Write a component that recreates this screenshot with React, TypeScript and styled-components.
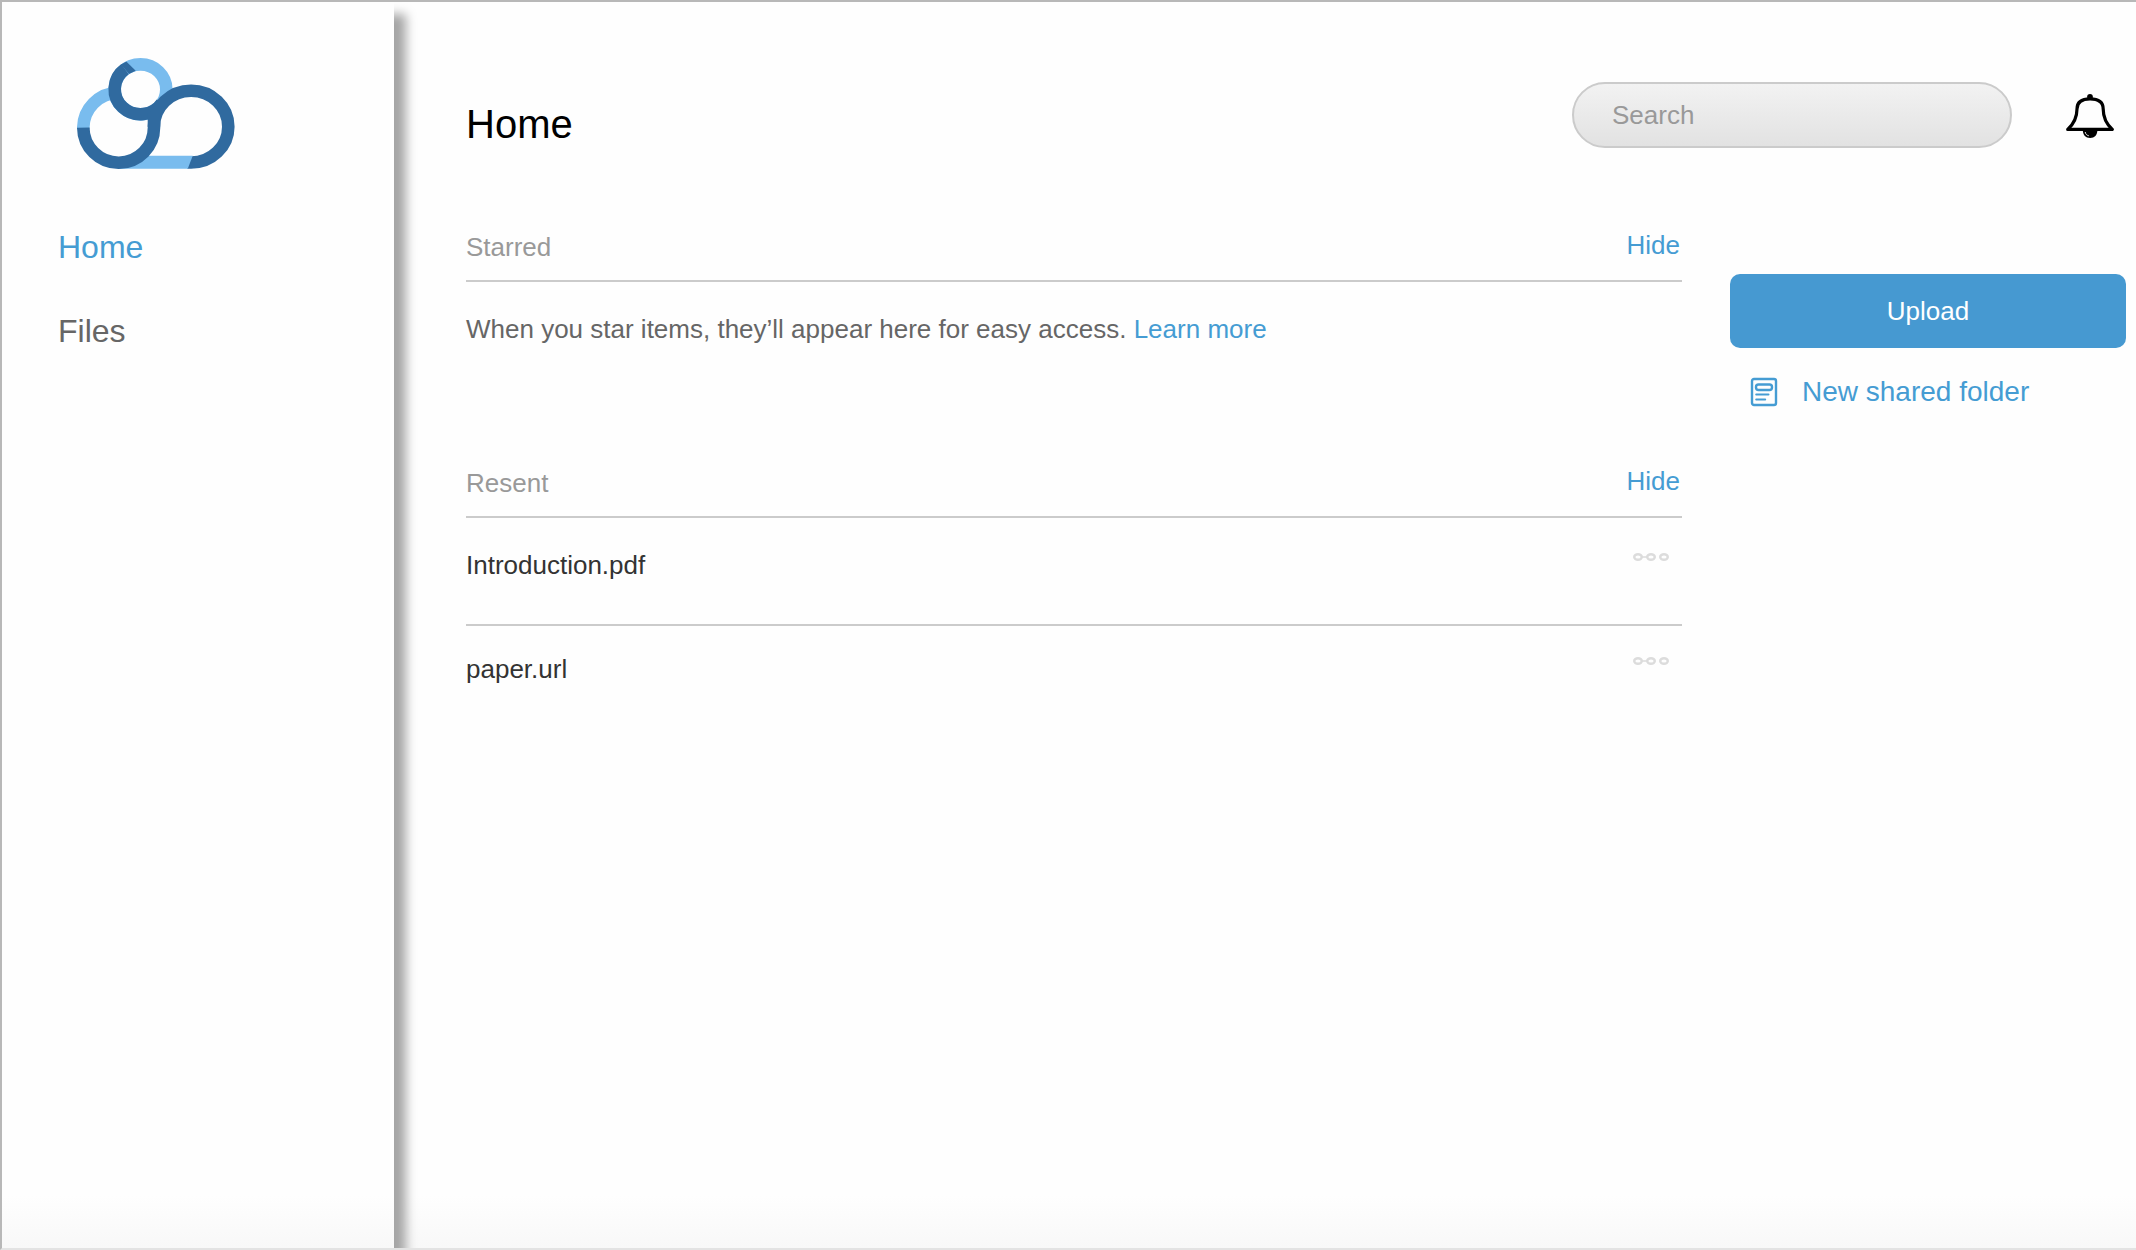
import React, { useState } from "react";
import styled, { createGlobalStyle } from "styled-components";

const color = {
  blue: "#459cd3",
  button: "#4699d1",
  logoDark: "#306a9f",
  logoLight: "#79bcee",
  line: "#cbcbcb",
  muted: "#999999",
  text: "#666666",
  strong: "#333333",
};

const GlobalStyle = createGlobalStyle`
  *, *::before, *::after { box-sizing: border-box; }
  body {
    margin: 0;
    font-family: "Liberation Sans", Arial, Helvetica, sans-serif;
    font-size: 26px;
    line-height: 30px;
    color: ${color.text};
  }
  button, input { font: inherit; }
  h1, h2, p, ul { margin: 0; padding: 0; font-weight: 400; }
  svg { display: block; }
`;

const Shell = styled.div`
  display: flex;
  min-height: 100vh;
  overflow: hidden;
  border-top: 2px solid #b8b8b8;
  border-left: 2px solid #b8b8b8;
  border-bottom: 2px solid #e3e3e3;
  background: linear-gradient(to top, #f8f8f8, #fefefe 52px);
`;

const Sidebar = styled.aside`
  flex: 0 0 392px;
  padding: 56px 20px 0 56px;
  box-shadow: 12px 12px 10px #a6a6a6;
`;

const LogoLink = styled.a`
  display: block;
  width: fit-content;
  margin-left: 19px;
`;

const Nav = styled.nav`
  display: flex;
  flex-direction: column;
  align-items: flex-start;
  gap: 48px;
  margin-top: 60px;
`;

const NavLink = styled.a<{ $active?: boolean }>`
  font-size: 32px;
  line-height: 36px;
  text-decoration: none;
  color: ${(p) => (p.$active ? color.blue : color.text)};
`;

const Main = styled.main`
  flex: 1;
  min-width: 0;
  padding: 80px 10px 0 72px;
`;

const Header = styled.header`
  display: flex;
  align-items: flex-end;
  padding-right: 12px;
`;

const Title = styled.h1`
  flex: 1;
  font-size: 40px;
  line-height: 48px;
  color: #000;
`;

const SearchInput = styled.input`
  width: 440px;
  height: 66px;
  padding: 0 38px;
  border: 2px solid ${color.line};
  border-radius: 33px;
  background: linear-gradient(#f2f2f2, #e2e2e2);
  color: ${color.strong};
  &::placeholder { color: ${color.muted}; opacity: 1; }
`;

const BellButton = styled.button`
  display: flex;
  align-items: center;
  height: 66px;
  margin-left: 54px;
  padding: 2px 0 0;
  border: 0;
  background: none;
  color: #000;
`;

const Columns = styled.div`
  display: grid;
  grid-template-columns: minmax(0, 1fr) 396px;
  gap: 48px;
  margin-top: 82px;
`;

const Sections = styled.div`
  display: flex;
  flex-direction: column;
`;

const Section = styled.section`
  min-height: 236px;
`;

const SectionHead = styled.div`
  display: flex;
  justify-content: space-between;
  min-height: 52px;
  padding: 0 2px 18px 0;
  border-bottom: 2px solid ${color.line};
`;

const SectionTitle = styled.h2`
  align-self: flex-end;
  font-size: 26px;
  line-height: 30px;
  color: ${color.muted};
`;

const TextButton = styled.button`
  align-self: flex-start;
  padding: 0;
  border: 0;
  background: none;
  color: ${color.blue};
  cursor: pointer;
`;

const Hint = styled.p`
  padding-top: 32px;
`;

const TextLink = styled.a`
  color: ${color.blue};
  text-decoration: none;
`;

const FileList = styled.ul`
  padding-top: 4px;
  list-style: none;
`;

const FileRow = styled.li`
  display: flex;
  justify-content: space-between;
  align-items: flex-start;
  padding: 28px 0 44px;
  & + & { border-top: 2px solid ${color.line}; }
`;

const FileLink = styled.a`
  color: ${color.strong};
  text-decoration: none;
`;

const MoreButton = styled.button`
  display: flex;
  align-items: center;
  height: 14px;
  padding: 0 13px;
  border: 0;
  background: none;
  color: #dcdcdc;
`;

const Actions = styled.div`
  display: flex;
  flex-direction: column;
  align-items: stretch;
  gap: 26px;
  padding-top: 44px;
`;

const UploadButton = styled.button`
  height: 74px;
  border: 0;
  border-radius: 10px;
  background: ${color.button};
  color: #fff;
`;

const FolderButton = styled.button`
  display: flex;
  align-items: center;
  gap: 24px;
  padding: 0 20px;
  border: 0;
  background: none;
  font-size: 28px;
  line-height: 36px;
  color: ${color.blue};
`;

const Logo = () => (
  <svg width="158" height="111" viewBox="77 57 158 111" fill="none" strokeWidth="12.6" aria-hidden="true">
    <path d="M83.3 128A35.4 35.4 0 0 1 118.7 91.8" stroke={color.logoLight} />
    <ellipse cx="140.5" cy="88.4" rx="25.8" ry="25" fill="#fefefe" stroke={color.logoLight} />
    <path d="M125 68.2A25.8 25 0 1 0 162 102" stroke={color.logoDark} />
    <path d="M126.3 60.4L135.7 69.7L129 73L121 63.6Z" fill={color.logoDark} />
    <path d="M187 161.5H191A37.2 35.9 0 1 0 153.9 125.7" stroke={color.logoDark} />
    <path d="M118.7 167.7L145 154.8H192.7L187.8 167.7H187Z" fill={color.logoLight} />
    <path d="M154 112V126.2A35.35 35.3 0 0 1 83.3 126.6" stroke={color.logoDark} />
  </svg>
);

const Bell = () => (
  <svg width="48" height="44" viewBox="0 0 48 44" fill="none" aria-hidden="true">
    <circle cx="24" cy="2.9" r="2.9" fill="currentColor" />
    <path
      d="M1.7 35.4C8.4 29.4 11 22.5 11 15C11 7.800 15.800 4.800 24 4.800S37.200 7.800 37.200 15C37.200 22.500 39.700 29.400 46.300 35.400Z"
      stroke="currentColor"
      strokeWidth="3.2"
      strokeLinejoin="round"
    />
    <path d="M16.8 36H31.4C31.4 41 28.5 44 24.1 44S16.8 41 16.8 36Z" fill="currentColor" />
    <path d="M19.2 38C19.5 40.2 21 41.4 22.8 41.8" stroke="#fff" strokeWidth="0.9" />
  </svg>
);

const FolderIcon = () => (
  <svg width="28" height="30" viewBox="0 0 28 30" fill="none" stroke="currentColor" strokeWidth="2.4" strokeLinecap="round" aria-hidden="true">
    <rect x="2" y="2" width="24" height="26" rx="2" />
    <rect x="6" y="7.5" width="16" height="5.5" rx="2.5" />
    <path d="M6.2 17.5H18.5M6.2 22.5H15.2" strokeWidth="2" />
  </svg>
);

const Dots = () => (
  <svg width="36" height="8" viewBox="0 0 36 8" fill="none" stroke="currentColor" strokeWidth="2.4" aria-hidden="true">
    <ellipse cx="5" cy="4" rx="3.8" ry="2.8" />
    <ellipse cx="18" cy="4" rx="3.8" ry="2.8" />
    <ellipse cx="31" cy="4" rx="3.8" ry="2.8" />
    <path d="M9 4H14" strokeWidth="1.6" />
  </svg>
);

const files = ["Introduction.pdf", "paper.url"];

function Panel({ title, children }: { title: string; children: React.ReactNode }) {
  const [open, setOpen] = useState(true);
  return (
    <Section>
      <SectionHead>
        <SectionTitle>{title}</SectionTitle>
        <TextButton type="button" aria-expanded={open} onClick={() => setOpen(!open)}>
          {open ? "Hide" : "Show"}
        </TextButton>
      </SectionHead>
      {open && children}
    </Section>
  );
}

export default function App() {
  return (
    <>
      <GlobalStyle />
      <Shell>
        <Sidebar>
          <LogoLink href="#home" aria-label="Home">
            <Logo />
          </LogoLink>
          <Nav>
            <NavLink href="#home" $active aria-current="page">Home</NavLink>
            <NavLink href="#files">Files</NavLink>
          </Nav>
        </Sidebar>
        <Main>
          <Header>
            <Title>Home</Title>
            <SearchInput type="search" placeholder="Search" aria-label="Search" />
            <BellButton type="button" aria-label="Notifications">
              <Bell />
            </BellButton>
          </Header>
          <Columns>
            <Sections>
              <Panel title="Starred">
                <Hint>
                  When you star items, they’ll appear here for easy access.{" "}
                  <TextLink href="#learn">Learn more</TextLink>
                </Hint>
              </Panel>
              <Panel title="Resent">
                <FileList>
                  {files.map((name) => (
                    <FileRow key={name}>
                      <FileLink href={`#${name}`}>{name}</FileLink>
                      <MoreButton type="button" aria-label={`More options for ${name}`}>
                        <Dots />
                      </MoreButton>
                    </FileRow>
                  ))}
                </FileList>
              </Panel>
            </Sections>
            <Actions>
              <UploadButton type="button">Upload</UploadButton>
              <FolderButton type="button">
                <FolderIcon />
                New shared folder
              </FolderButton>
            </Actions>
          </Columns>
        </Main>
      </Shell>
    </>
  );
}
